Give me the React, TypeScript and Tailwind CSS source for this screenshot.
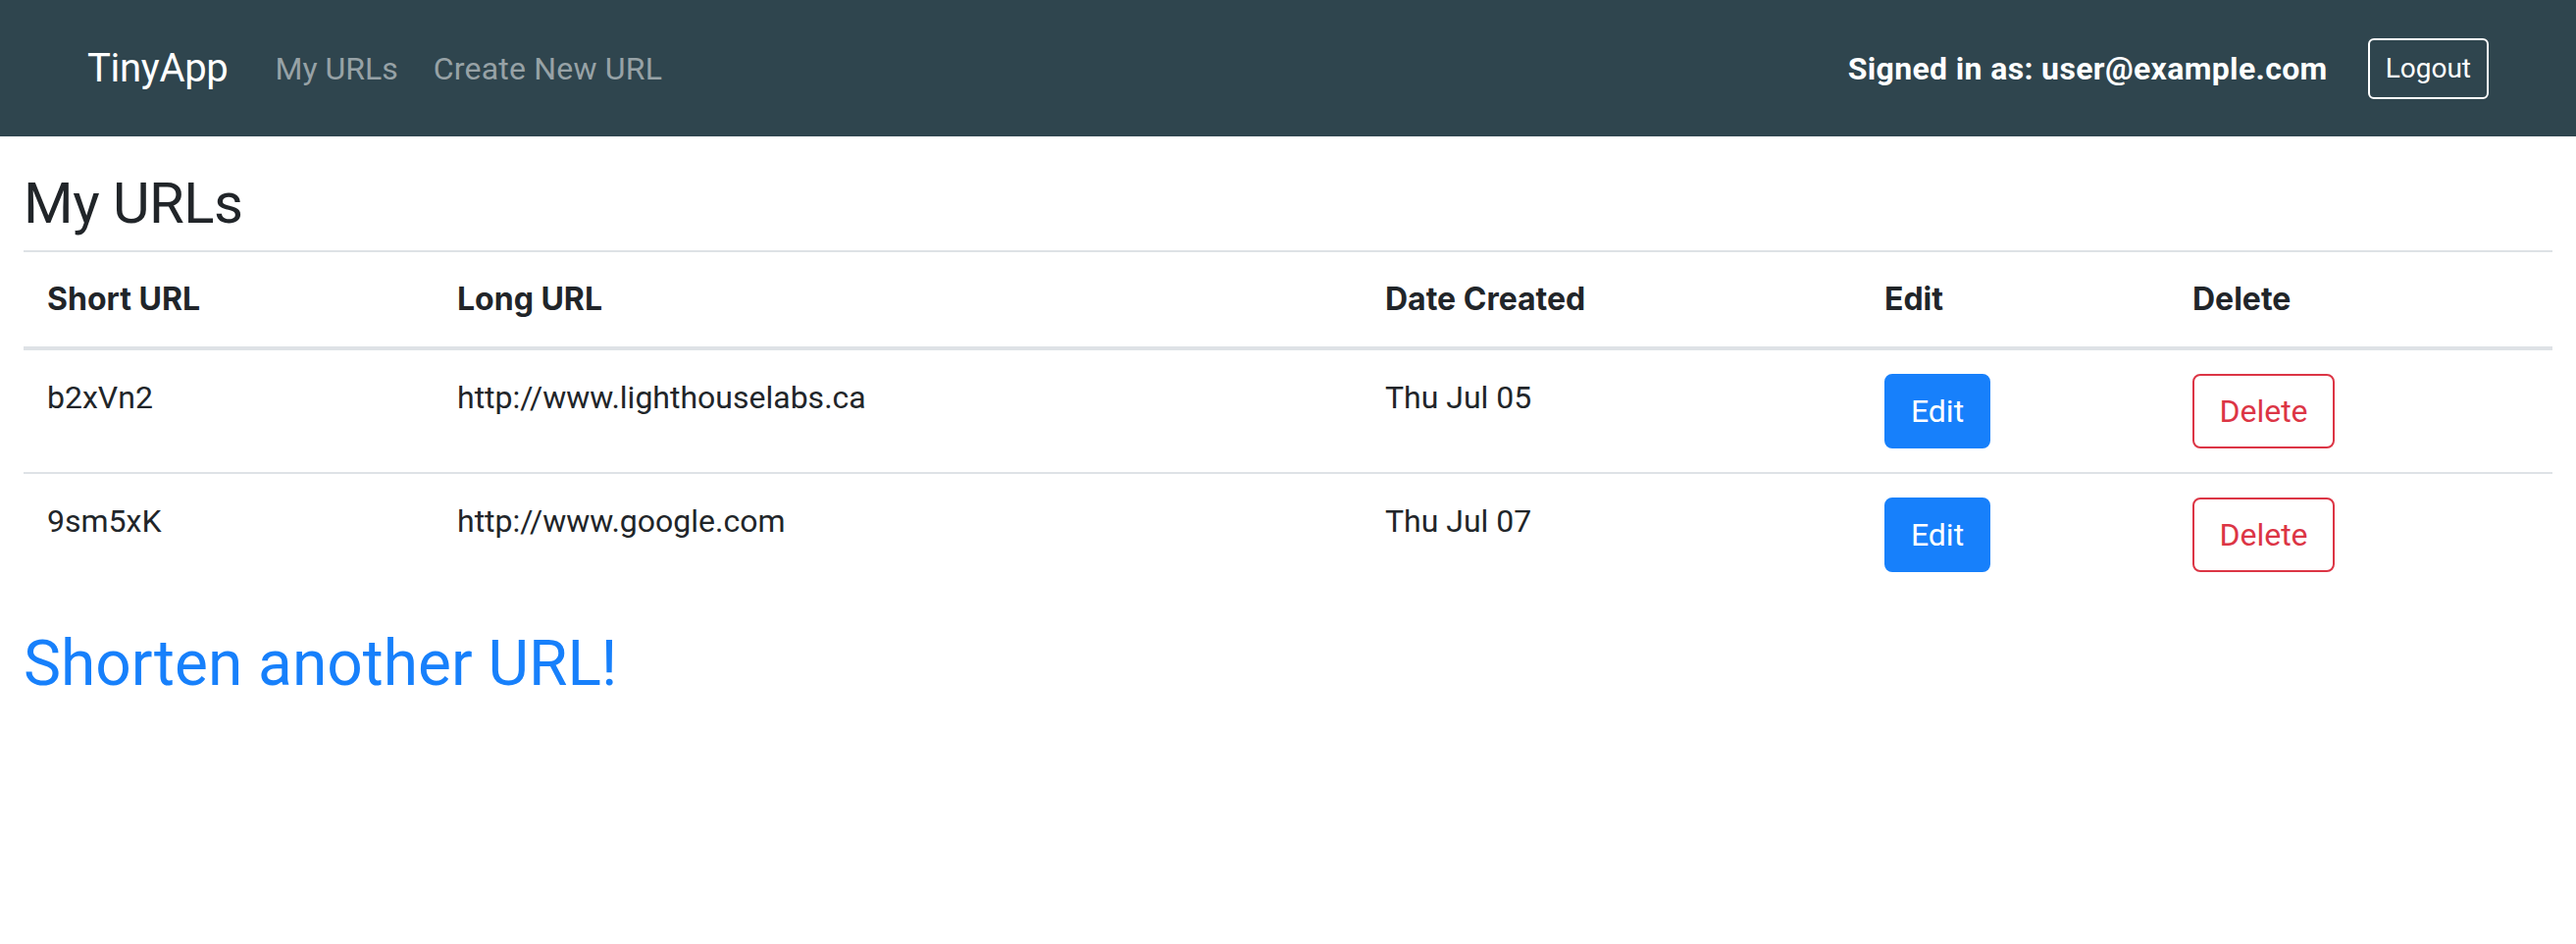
import React from "react";

const rows = [
  { short: "b2xVn2", long: "http://www.lighthouselabs.ca", date: "Thu Jul 05" },
  { short: "9sm5xK", long: "http://www.google.com", date: "Thu Jul 07" },
];

const font = { fontFamily: 'Roboto, Inter, "Noto Sans", "Liberation Sans", sans-serif' };
const boldFont = { fontFamily: 'Inter, Roboto, "Noto Sans", "Liberation Sans", sans-serif' };

export default function App() {
  return (
    <div className="min-h-screen bg-white text-[#212529]" style={font}>
      <nav className="flex h-[139px] items-center bg-[#2f454e] px-[89px]">
        <a className="mr-[48px] text-[40px] leading-[60px] tracking-[-0.3px] text-white">TinyApp</a>
        <div className="flex items-center gap-[36px] text-[32px] leading-[48px] text-[#97a2a6]">
          <a>My URLs</a>
          <a className="tracking-[0.2px]">Create New URL</a>
        </div>
        <div className="ml-auto flex items-center">
          <span className="mr-[41px] text-[32px] font-bold leading-[48px] tracking-[0.35px] text-white">
            Signed in as: user@example.com
          </span>
          <button className="h-[62px] rounded-[6px] border-2 border-white px-[16px] text-[28px] leading-[42px] text-white">
            Logout
          </button>
        </div>
      </nav>

      <main className="px-[24px]">
        <h2 className="mt-[30px] mb-[10px] text-[58px] font-normal leading-[76px] tracking-[-0.5px]">My URLs</h2>

        <div className="w-full">
          <div className="grid grid-cols-[418px_946px_509px_314px_1fr] border-t-2 border-b-4 border-[#dee2e6]">
            {["Short URL", "Long URL", "Date Created", "Edit", "Delete"].map((h) => (
              <div key={h} className="p-[24px] text-[32px] font-bold leading-[48px]" style={boldFont}>
                {h}
              </div>
            ))}
          </div>
          {rows.map((r, i) => (
            <div
              key={r.short}
              className={
                i === 0
                  ? "grid grid-cols-[418px_946px_509px_314px_1fr]"
                  : "grid grid-cols-[418px_946px_509px_314px_1fr] border-t-2 border-[#dee2e6]"
              }
            >
              <div className="p-[24px] text-[32px] leading-[48px]">{r.short}</div>
              <div className="p-[24px] text-[32px] leading-[48px]">{r.long}</div>
              <div className="p-[24px] text-[32px] leading-[48px]">{r.date}</div>
              <div className="p-[24px]">
                <button className="h-[76px] w-[108px] rounded-[8px] border-2 border-[#1780fb] bg-[#1780fb] text-[32px] leading-[48px] text-white">
                  Edit
                </button>
              </div>
              <div className="p-[24px]">
                <button className="h-[76px] w-[145px] rounded-[8px] border-2 border-[#dc3545] bg-white text-[32px] leading-[48px] text-[#dc3545]">
                  Delete
                </button>
              </div>
            </div>
          ))}
        </div>

        <h2 className="mt-[32px] text-[64px] font-normal leading-[76px]">
          <a className="text-[#1780fb]">Shorten another URL!</a>
        </h2>
      </main>
    </div>
  );
}
